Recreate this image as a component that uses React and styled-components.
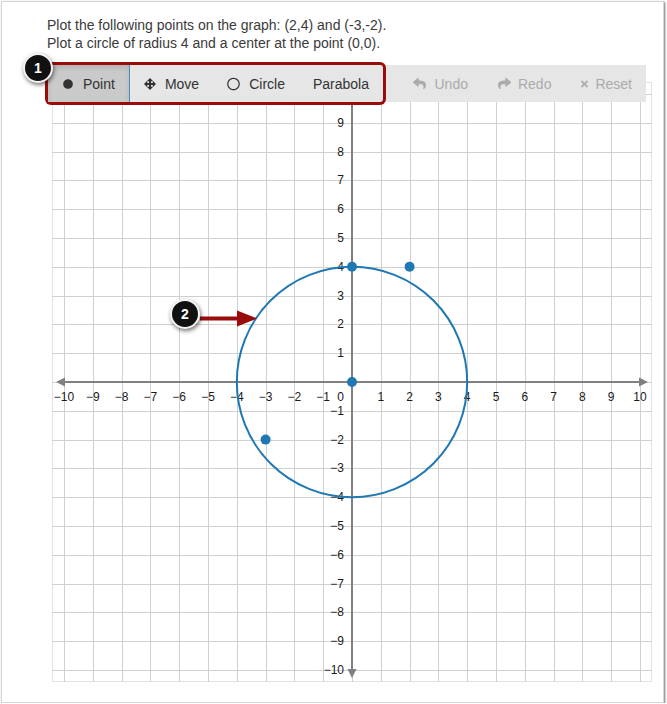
import React from 'react';
import styled, { createGlobalStyle } from 'styled-components';
import { FaCircle, FaRegCircle, FaReply, FaShare, FaTimes } from 'react-icons/fa';

const Global = createGlobalStyle`
  html, body { margin: 0; padding: 0; background: #fff; }
  body { font-family: "Liberation Sans", Arial, sans-serif; }
`;

const Card = styled.div`
  position: relative;
  box-sizing: border-box;
  width: 663px;
  height: 702px;
  margin: 1px 0 0 1px;
  border: 1px solid #d6d6d6;
  box-shadow: 1px 1px 2px rgba(0, 0, 0, 0.55);
  background: #fff;
  padding: 14px 0 0 46px;
`;

const Prompt = styled.p`
  margin: 0 0 0 -1px;
  font-size: 14px;
  line-height: 18px;
  color: #3a3a3a;
`;

const Toolbar = styled.div`
  position: relative;
  z-index: 2;
  display: flex;
  justify-content: space-between;
  width: 598px;
  height: 37px;
  margin-top: 13px;
  background: #e6e6e6;
`;

const ToolGroup = styled.div`
  display: flex;
  height: 100%;
  border-radius: ${(p) => (p.$highlight ? '3px' : '0')};
  box-shadow: ${(p) => (p.$highlight ? '0 0 0 3px #9a0c0c' : 'none')};
`;

const ToolButton = styled.div`
  display: flex;
  align-items: center;
  height: 100%;
  box-sizing: border-box;
  padding: 0 ${(p) => p.$pad || 14}px;
  font-size: 14px;
  color: ${(p) => (p.$disabled ? '#ababab' : '#333')};
  background: ${(p) => (p.$active ? '#cacaca' : 'transparent')};
  box-shadow: ${(p) => (p.$active ? 'inset 0 3px 5px rgba(0,0,0,0.12)' : 'none')};
  border-right: ${(p) => (p.$active ? '1px solid #4a8cc4' : 'none')};
`;

const Icon = styled.span`
  display: inline-flex;
  justify-content: center;
  align-items: center;
  width: ${(p) => p.$w || 12}px;
  margin-right: ${(p) => p.$gap || 9}px;
  color: inherit;
`;

const Graph = styled.div`
  position: relative;
  z-index: 1;
  width: 600px;
  height: 600px;
  margin: -20px 0 0 4px;
`;

const Badge = styled.div`
  position: absolute;
  left: ${(p) => p.$x}px;
  top: ${(p) => p.$y}px;
  z-index: 5;
  width: 26px;
  height: 26px;
  border: 2px solid #f4f4f4;
  border-radius: 50%;
  background: #111;
  color: #fff;
  font-size: 14px;
  font-weight: bold;
  display: flex;
  align-items: center;
  justify-content: center;
  box-shadow: 1px 2px 4px rgba(0, 0, 0, 0.55);
`;

const Pointer = styled.svg`
  position: absolute;
  left: ${(p) => p.$x}px;
  top: ${(p) => p.$y}px;
  z-index: 4;
  overflow: visible;
`;

function MoveIcon() {
  return (
    <svg width="12" height="12" viewBox="0 0 12 12" fill="currentColor">
      <rect x="2" y="5" width="8" height="2" />
      <rect x="5" y="2" width="2" height="8" />
      <polygon points="0,6 3.2,2.8 3.2,9.2" />
      <polygon points="12,6 8.8,2.8 8.8,9.2" />
      <polygon points="6,0 2.8,3.2 9.2,3.2" />
      <polygon points="6,12 2.8,8.8 9.2,8.8" />
    </svg>
  );
}

const S = 28.8;
const C = 300;
const range = Array.from({ length: 21 }, (_, i) => i - 10);
const fmt = (n) => (n < 0 ? '\u2212' + Math.abs(n) : String(n));
const px = (v) => C + v * S;
const py = (v) => C - v * S;

function Plot() {
  const points = [
    [0, 4],
    [2, 4],
    [0, 0],
    [-3, -2],
  ];
  return (
    <svg width="600" height="600" viewBox="0 0 600 600">
      <rect x="0.5" y="0.5" width="599" height="599" fill="#fff" stroke="#e2e2e2" />
      {range.map((i) => {
        const x = Math.round(px(i)) + 0.5;
        const y = Math.round(py(i)) + 0.5;
        return (
          <g key={i} stroke="#d0d0d0" strokeWidth="1">
            <line x1={x} y1="0" x2={x} y2="600" />
            <line x1="0" y1={y} x2="600" y2={y} />
          </g>
        );
      })}
      <g stroke="#808080" strokeWidth="2">
        <line x1="10" y1="300" x2="590" y2="300" />
        <line x1="300" y1="10" x2="300" y2="590" />
      </g>
      <g fill="#808080">
        <polygon points="4,300 13,295.5 13,304.5" />
        <polygon points="596,300 587,295.5 587,304.5" />
        <polygon points="300,4 295.5,13 304.5,13" />
        <polygon points="300,596 295.5,587 304.5,587" />
      </g>
      <g fontFamily='"Liberation Sans", Arial, sans-serif' fontSize="12" fill="#1a1a1a">
        {range
          .filter((i) => i !== 0)
          .map((i) => (
            <text key={'x' + i} x={px(i)} y="319" textAnchor="middle">
              {fmt(i)}
            </text>
          ))}
        {range
          .filter((i) => i !== 0 && i !== 10)
          .map((i) => (
            <text key={'y' + i} x="292" y={py(i) + 4} textAnchor="end">
              {fmt(i)}
            </text>
          ))}
        <text x="292" y="319" textAnchor="end">
          0
        </text>
      </g>
      <circle cx={C} cy={C} r={4 * S} fill="none" stroke="#1f77b4" strokeWidth="2" />
      {points.map(([a, b]) => (
        <circle key={a + ',' + b} cx={px(a)} cy={py(b)} r="5" fill="#1f77b4" />
      ))}
    </svg>
  );
}

export default function App() {
  return (
    <>
      <Global />
      <Card>
        <Prompt>
          Plot the following points on the graph: (2,4) and (-3,-2).
          <br />
          Plot a circle of radius 4 and a center at the point (0,0).
        </Prompt>
        <Toolbar>
          <ToolGroup $highlight>
            <ToolButton $active>
              <Icon>
                <FaCircle size={10} />
              </Icon>
              Point
            </ToolButton>
            <ToolButton>
              <Icon>
                <MoveIcon />
              </Icon>
              Move
            </ToolButton>
            <ToolButton>
              <Icon $w={13}>
                <FaRegCircle size={14} />
              </Icon>
              Circle
            </ToolButton>
            <ToolButton>Parabola</ToolButton>
          </ToolGroup>
          <ToolGroup>
            <ToolButton $disabled $pad={15}>
              <Icon $w={13} $gap={8}>
                <FaReply size={13} />
              </Icon>
              Undo
            </ToolButton>
            <ToolButton $disabled $pad={15}>
              <Icon $w={13} $gap={7}>
                <FaShare size={13} />
              </Icon>
              Redo
            </ToolButton>
            <ToolButton $disabled $pad={14}>
              <Icon $w={9} $gap={6}>
                <FaTimes size={10} />
              </Icon>
              Reset
            </ToolButton>
          </ToolGroup>
        </Toolbar>
        <Graph>
          <Plot />
        </Graph>
        <Pointer $x={198} $y={308} width="57" height="17" viewBox="0 0 57 17">
          <line x1="0" y1="8.5" x2="38" y2="8.5" stroke="#9a0c0c" strokeWidth="4" />
          <polygon points="37,0.5 57,8.5 37,16.5" fill="#9a0c0c" />
        </Pointer>
        <Badge $x={21} $y={51}>1</Badge>
        <Badge $x={168} $y={297}>2</Badge>
      </Card>
    </>
  );
}
